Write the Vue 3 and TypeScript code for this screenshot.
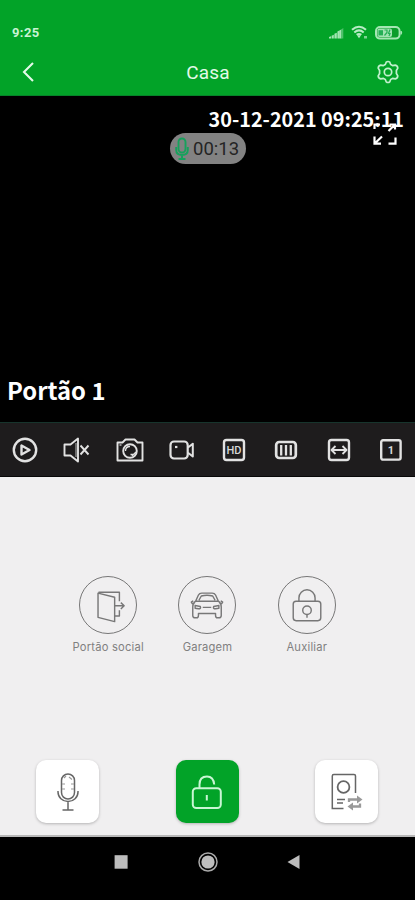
<script setup lang="ts">
import { ref } from 'vue'

interface Door {
  id: 'door' | 'car' | 'lock'
  label: string
}

const title = ref('Casa')
const timestamp = ref('30-12-2021 09:25:11')
const callTime = ref('00:13')
const camera = ref('Portão 1')
const doors: Door[] = [
  { id: 'door', label: 'Portão social' },
  { id: 'car', label: 'Garagem' },
  { id: 'lock', label: 'Auxiliar' },
]
</script>

<template>
  <div class="screen">
    <header class="top">
      <div class="status">
        <span class="clock">9:25</span>
        <div class="status-icons">
          <svg class="signal" width="16" height="12" viewBox="0 0 16 12">
            <path d="M0 11.5V10l2-.7v2.2zM2.6 11.5V8.7l2.2-1v3.8zM5.400 11.5V6.700l2.400-1v5.800zM8.400 11.5V4.500l2.500-1.200v8.200z" fill="#a5e6b4" />
            <path d="M11 11.5V3.200l1.500-1v9.300z" fill="#a5e6b4" />
            <path d="M12.500 11.5V2.200L14.300 1v10.5z" fill="#4fc26c" />
          </svg>
          <svg class="wifi" width="18" height="15" viewBox="0 0 18 15">
            <path d="M1 4.8Q8 -1.4 15 4.8M3.3 7.4Q8 3.4 12.7 7.4M5.6 9.8Q8 8 10.4 9.8" fill="none" stroke="#b8ecc5" stroke-width="2" />
            <path d="M6 10.3h4l-2 3z" fill="#b8ecc5" />
            <rect x="13" y="11" width="3" height="2.5" fill="#7bd592" />
          </svg>
          <svg class="battery" width="28" height="14" viewBox="0 0 28 14">
            <rect x="1" y="1" width="23.6" height="11.6" rx="4" fill="#0b9d2b" stroke="#a5e6b4" stroke-width="2" />
            <rect x="2.5" y="2.5" width="14.500" height="8.6" rx="2" fill="#a0e3b1" />
            <path d="M25.5 5h1.2q1 1.8 0 3.6h-1.2z" fill="#a5e6b4" />
            <path d="M3.500 4.200h4.500v5.200H3.500z" fill="#24af55" />
            <path d="M9.500 4h2.500v2.500l-2.500 3M15 3.5l-1.500 4h1.500l-1 2.500" fill="none" stroke="#24af55" stroke-width="1.2" />
          </svg>
        </div>
      </div>
      <div class="title-bar">
        <svg class="back" width="14" height="22" viewBox="0 0 14 22">
          <path d="M12 2 3 11l9 9" fill="none" stroke="#e4fae9" stroke-width="2.1" />
        </svg>
        <h1>{{ title }}</h1>
        <svg class="gear" width="24" height="24" viewBox="0 0 24 24" fill="none" stroke="#c1f0cd" stroke-width="1.7" stroke-linejoin="round">
          <path d="M10.2 2.2Q12 .8 13.8 2.2L14.7 4.5Q15.7 5 16.6 5.6L19.3 5.1Q21.6 5.6 21.8 8.1L20.4 10.5V13.5L21.8 15.9Q21.6 18.4 19.3 18.9L16.6 18.4Q15.7 19 14.7 19.5L13.8 21.8Q12 23.2 10.2 21.8L9.3 19.5Q8.3 19 7.4 18.4L4.7 18.9Q2.4 18.4 2.2 15.9L3.6 13.5V10.5L2.2 8.1Q2.4 5.6 4.7 5.1L7.4 5.6Q8.3 5 9.3 4.5Z" />
          <circle cx="12" cy="12" r="3.7" />
        </svg>
      </div>
    </header>

    <section class="video">
      <time class="timestamp">{{ timestamp }}</time>
      <div class="call">
        <svg width="14" height="24" viewBox="0 0 14 24" fill="none" stroke="#16a15c" stroke-width="1.9">
          <rect x="3.5" y="1.5" width="7" height="14" rx="3.5" />
          <path d="M1.2 10v3q0 5 5.8 5t5.8-5v-3M7 18v4M3.5 22h7" />
        </svg>
        <span>{{ callTime }}</span>
      </div>
      <svg class="expand" width="24" height="24" viewBox="0 0 24 24" fill="none" stroke="#fff" stroke-width="2.2">
        <path d="M1.500 7V2.500H7M16.500 2.500H22V7.500M22.500 15.500v6.200h-7M1.500 14.500v7.200h6.500M2.500 20.700l6.500-6.200M15.500 9l6-6" />
      </svg>
      <span class="camera">{{ camera }}</span>
    </section>

    <nav class="tools">
      <svg viewBox="0 0 28 28">
        <circle cx="14" cy="14" r="11.2" stroke-width="2.4" />
        <path d="M10.5 9.500v9l8-4.500z" stroke-width="2.4" />
      </svg>
      <svg viewBox="0 0 28 28">
        <path d="M1.5 8.5h6l7.500-6v23l-7.500-6h-6zM17.5 9.5l8 9M25.500 9.5l-8 9" stroke-width="1.9" />
        <path d="M13 7v14" stroke="#888" stroke-width="1.500" />
      </svg>
      <svg viewBox="0 0 28 28">
        <path d="M1.5 6.5h5L9.5 3.500h9l3 3h5v18h-25z" stroke-width="1.9" />
        <circle cx="14" cy="15" r="6.8" stroke-width="1.9" />
        <path d="M9.5 15q0-4.5 4.5-4.5M16 20l4-4M14.5 18.5h4" stroke-width="1.3" />
        <path d="M3.5 9h2" stroke-width="1.2" />
      </svg>
      <svg viewBox="0 0 28 28">
        <rect x="2.5" y="5.5" width="17.2" height="17" rx="3.5" stroke-width="2.2" />
        <path d="M20 11.5 24.8 7.7V20.5L20 16.7" stroke-width="2" />
        <path d="M7 11h2.4" stroke-width="2.200" />
      </svg>
      <svg viewBox="0 0 28 28">
        <rect x="4" y="4" width="20" height="20" rx="2.5" stroke-width="2.4" />
        <text class="hd" x="14" y="18" font-size="11">HD</text>
      </svg>
      <svg viewBox="0 0 28 28">
        <rect x="4.2" y="6" width="19.6" height="16" rx="3" stroke-width="2.7" />
        <path d="M9.200 9v10.5M14 9v10.5M18.8 9v10.5" stroke-width="2.3" />
      </svg>
      <svg viewBox="0 0 28 28">
        <rect x="4" y="4" width="20" height="20" rx="2.5" stroke-width="2.4" />
        <path d="M6 14h16M10.5 10 6.5 14l4 4M17.5 10l4 4-4 4" stroke-width="1.8" />
      </svg>
      <svg viewBox="0 0 28 28">
        <rect x="4.2" y="4.2" width="19.4" height="19.4" rx="1.8" stroke-width="2.4" />
        <text x="14" y="18" font-size="11">1</text>
      </svg>
    </nav>

    <main class="panel">
      <div class="doors">
        <button v-for="door in doors" :key="door.id" class="door">
          <span class="ring">
            <svg v-if="door.id === 'door'" viewBox="0 0 40 40">
              <path d="M9.500 7.5 27 11.8V37.5L9.500 33zM10 6.5H32V16M27.500 31.500H32V25.5M27.500 20.800h9M33.500 17.500l3.500 3.300-3.500 3.300" />
            </svg>
            <svg v-else-if="door.id === 'car'" viewBox="0 0 40 40">
              <path d="M8 16 11 9.5Q12 7.5 14.5 7.5H25.5Q28 7.5 29 9.5L32 16Q35 18 35 22V31Q35 33.5 32.5 33.5H31Q29 33.5 29 31V29H11V31Q11 33.5 9 33.5H7.5Q5 33.5 5 31V22Q5 18 8 16ZM8 16H32M11.5 15 14 10.5Q20 9 26 10.5L28.5 15M5.5 15.5 3.5 17 4.5 18.5H7M34.5 15.5 36.5 17 35.5 18.5H33M7.5 20.5 13 21.5Q14 24 11 24L7.5 23.5ZM32.5 20.5 27 21.5Q26 24 29 24L32.5 23.5ZM15.500 22.500H24.500" />
            </svg>
            <svg v-else viewBox="0 0 40 40">
              <rect x="5.500" y="16" width="29" height="20.500" rx="3" />
              <path d="M11.500 16V12.5a8.500 8.500 0 0 1 17 0V16M20 30v3.500" />
              <circle cx="20" cy="25.5" r="4.500" />
            </svg>
          </span>
          <span class="label">{{ door.label }}</span>
        </button>
      </div>

      <div class="actions">
        <button class="tile">
          <svg viewBox="0 0 40 40" stroke-width="1.5">
            <rect x="13.500" y="2" width="13" height="25" rx="6.500" />
            <path d="M10 19v1a10 9.5 0 0 0 20 0v-1M20 29.500v8.5M14.500 38h11" />
            <path d="M14 12h3M23 12h3M14 17h3M23 17h3M21 5l3 2.5M16 6l2-2" stroke="#999" stroke-width="1.2" />
          </svg>
        </button>
        <button class="tile unlock">
          <svg viewBox="0 0 40 40" stroke-width="2">
            <rect x="5.8" y="16.2" width="28" height="19.8" rx="3.5" />
            <path d="M12.500 16V12.500Q12.500 4.500 20 4.500 26.500 4.500 27.200 12.500M19.800 23v5.5" />
          </svg>
        </button>
        <button class="tile">
          <svg viewBox="0 0 40 40" stroke-width="1.5">
            <path d="M16.500 36.500H5.300V4Q5.300 2.500 6.800 2.500H27Q28.500 2.500 28.500 4V21M10 27.500h8M10 31h6" />
            <circle cx="16.500" cy="15" r="5.900" stroke-width="1.800" />
            <g stroke="#999" stroke-width="2.300"><path d="M22 30v-2.500h9M24 34.500H33V31.500" /></g>
            <path d="M30 23.500 35.500 27.500 30 31.500zM26 30.500 20.500 34.500 26 38.500z" fill="#999" stroke="none" />
          </svg>
        </button>
      </div>
    </main>

    <footer class="system-nav">
      <svg viewBox="0 0 20 20"><rect x="3.600" y="3.200" width="13" height="13.500" /></svg>
      <svg viewBox="0 0 20 20">
        <circle cx="10" cy="10" r="9" fill="none" stroke="#aaa" stroke-width="1.500" />
        <circle cx="10" cy="10" r="6.600" />
      </svg>
      <svg viewBox="0 0 20 20"><path d="M3.500 10 15.500 3v14z" /></svg>
    </footer>
  </div>
</template>

<style>
body {
  background: #000;
}
</style>

<style scoped>
.screen {
  width: 415px;
  height: 900px;
  display: flex;
  flex-direction: column;
  overflow: hidden;
  background: #f0eff0;
  font-family: Roboto, "Liberation Sans", sans-serif;
}
.screen * {
  box-sizing: border-box;
}
svg {
  display: block;
  flex: none;
}
button {
  border: 0;
  padding: 0;
  background: none;
  font: inherit;
}
.top {
  height: 96px;
  background: #02a328;
  border-bottom: 1px solid #06842a;
}
.status {
  height: 48px;
  padding: 17px 12px 0 12px;
  display: flex;
  justify-content: space-between;
  align-items: center;
}
.clock {
  color: #c9f3d3;
  font-size: 13px;
  font-weight: 700;
  letter-spacing: 0.4px;
}
.status-icons {
  display: flex;
  align-items: center;
  gap: 6px;
}
.title-bar {
  height: 48px;
  display: grid;
  grid-template-columns: 100px 1fr 100px;
  align-items: center;
  padding: 0 15px 0 21px;
}
.title-bar h1 {
  margin: 0 0 0 -5px;
  text-align: center;
  color: #e4fae9;
  font-size: 19px;
  font-weight: 400;
  letter-spacing: 0.2px;
}
.gear {
  justify-self: end;
}
.video {
  position: relative;
  height: 326px;
  background: #000;
  color: #fff;
}
.timestamp,
.camera {
  position: absolute;
  font-family: "Noto Sans CJK SC", "Noto Sans", sans-serif;
  font-weight: 700;
  white-space: nowrap;
}
.timestamp {
  top: 8px;
  right: 11px;
  font-size: 19.800px;
  line-height: 30px;
}
.camera {
  left: 7px;
  bottom: 14px;
  font-size: 23.800px;
  line-height: 36px;
}
.call {
  position: absolute;
  top: 37px;
  left: 170px;
  width: 76px;
  height: 31px;
  padding-left: 5px;
  border-radius: 16px;
  background: #828282;
  display: flex;
  align-items: center;
  gap: 4px;
  color: #242424;
  font-size: 18.500px;
}
.expand {
  position: absolute;
  top: 26px;
  left: 373px;
}
.tools {
  height: 55px;
  padding: 0 10px 0 11px;
  border-top: 1px solid #17342c;
  border-bottom: 1px solid #080808;
  background: #1e1c1d;
  display: flex;
  justify-content: space-between;
  align-items: center;
}
.tools svg {
  width: 28px;
  height: 28px;
  fill: none;
  stroke: #e2e2e2;
  stroke-linejoin: round;
}
.tools text {
  fill: #d8d8d8;
  stroke: none;
  text-anchor: middle;
  font-family: Roboto, "Liberation Sans", sans-serif;
  font-weight: 700;
}
.tools .hd {
  font-weight: 500;
}
.panel {
  height: 360px;
  padding-top: 99px;
  display: flex;
  flex-direction: column;
  justify-content: space-between;
  border-bottom: 2px solid #b8b8b8;
}
.doors {
  display: grid;
  grid-template-columns: repeat(3, 99.300px);
  justify-content: center;
}
.door {
  display: flex;
  flex-direction: column;
  align-items: center;
  gap: 6px;
}
.ring {
  width: 58px;
  height: 58px;
  border: 1.500px solid #777;
  border-radius: 50%;
  display: grid;
  place-items: center;
}
.ring svg {
  width: 38px;
  height: 38px;
  fill: none;
  stroke: #777;
  stroke-width: 1.500;
  stroke-linejoin: round;
}
.label {
  color: #808080;
  font-family: Inter, Roboto, sans-serif;
  font-size: 11.200px;
  line-height: 15px;
  letter-spacing: 0.200px;
  white-space: nowrap;
}
.actions {
  padding: 0 37px 12px 36px;
  display: flex;
  justify-content: space-between;
}
.tile {
  width: 63px;
  height: 63px;
  border-radius: 10px;
  background: #fff;
  box-shadow: 0 1px 3px rgba(0, 0, 0, 0.25);
  display: grid;
  place-items: center;
}
.tile svg {
  width: 40px;
  height: 40px;
  fill: none;
  stroke: #666;
}
.unlock {
  background: #02a328;
}
.unlock svg {
  stroke: #c9f6d4;
}
.system-nav {
  flex: 1;
  padding: 15px 111px 0;
  background: #000;
  display: flex;
  justify-content: space-between;
}
.system-nav svg {
  width: 20px;
  height: 20px;
  fill: #bdbdbd;
}
</style>
